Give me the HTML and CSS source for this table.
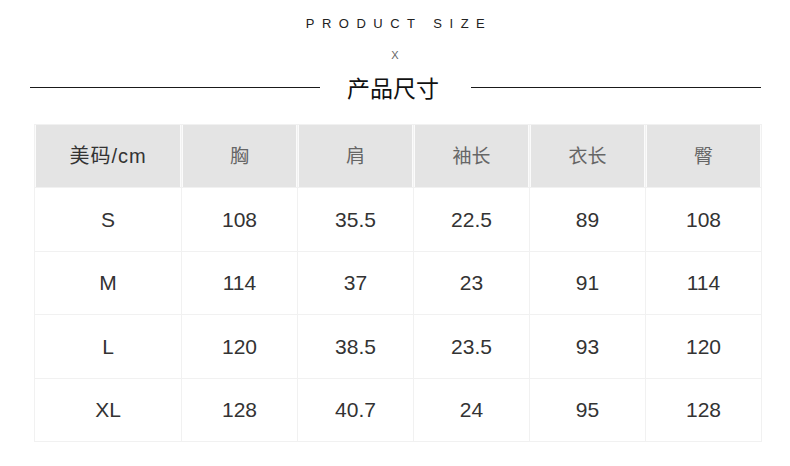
FILE: index.html
```html
<!DOCTYPE html>
<html lang="zh">
<head>
<meta charset="utf-8">
<link rel="stylesheet" href="styles.css">
</head>
<body>
<div class="page">
  <div class="en-title">PRODUCT SIZE</div>
  <div class="x-mark">X</div>
  <div class="cn-title">
    <span class="rule"></span>
    <span class="cn-text">产品尺寸</span>
    <span class="rule"></span>
  </div>
  <div class="size-table">
    <div class="cell head first">美码/cm</div>
    <div class="cell head">胸</div>
    <div class="cell head">肩</div>
    <div class="cell head">袖长</div>
    <div class="cell head">衣长</div>
    <div class="cell head">臀</div>

    <div class="cell">S</div>
    <div class="cell">108</div>
    <div class="cell">35.5</div>
    <div class="cell">22.5</div>
    <div class="cell">89</div>
    <div class="cell">108</div>

    <div class="cell">M</div>
    <div class="cell">114</div>
    <div class="cell">37</div>
    <div class="cell">23</div>
    <div class="cell">91</div>
    <div class="cell">114</div>

    <div class="cell">L</div>
    <div class="cell">120</div>
    <div class="cell">38.5</div>
    <div class="cell">23.5</div>
    <div class="cell">93</div>
    <div class="cell">120</div>

    <div class="cell">XL</div>
    <div class="cell">128</div>
    <div class="cell">40.7</div>
    <div class="cell">24</div>
    <div class="cell">95</div>
    <div class="cell">128</div>
  </div>
</div>
</body>
</html>
```
FILE: styles.css
```css
html, body {
  margin: 0;
  padding: 0;
  background: #ffffff;
}
.page {
  width: 790px;
  height: 466px;
  font-family: "Liberation Sans", "Noto Sans CJK SC", sans-serif;
  color: #333;
  overflow: hidden;
}
.en-title {
  padding-top: 16px;
  height: 16px;
  line-height: 16px;
  font-size: 13px;
  letter-spacing: 7.5px;
  padding-left: 8px;
  text-align: center;
  color: #222;
}
.x-mark {
  margin-top: 16px;
  height: 14px;
  line-height: 14px;
  font-size: 11px;
  text-align: center;
  color: #666;
  font-weight: 300;
}
.cn-title {
  display: flex;
  align-items: center;
  height: 32px;
  margin-top: 9px;
  padding-left: 30px;
}
.rule {
  width: 290px;
  height: 1px;
  background: #1a1a1a;
}
.cn-text {
  font-family: "Noto Sans CJK SC", sans-serif;
  font-size: 23px;
  line-height: 32px;
  color: #111;
  margin-left: 27px;
  margin-right: 31px;
  width: 93px;
  white-space: nowrap;
}
.size-table {
  margin-top: 21px;
  margin-left: 34px;
  width: 728px;
  display: grid;
  grid-template-columns: 146px repeat(5, 115px);
  grid-template-rows: 62px 63px 62px 63px 62px;
  gap: 1px;
  padding: 1px;
  box-sizing: border-box;
  background: #f1f1f1;
}
.cell {
  background: #ffffff;
  display: flex;
  align-items: center;
  justify-content: center;
  font-size: 21px;
  color: #333;
}
.head {
  background: #e4e4e4;
  box-shadow: inset -1px 0 0 #fbfbfb, inset 1px 0 0 #fbfbfb;
  font-family: "Noto Sans CJK SC", sans-serif;
  font-size: 19px;
  color: #666;
  padding-bottom: 4px;
  box-sizing: border-box;
}
.head.first {
  color: #333;
  font-size: 20px;
  letter-spacing: 1px;
  font-family: "Liberation Sans", "Noto Sans CJK SC", sans-serif;
}
```
